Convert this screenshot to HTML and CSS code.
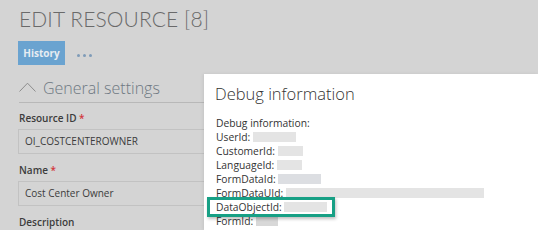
FILE: index.html
```html
<!DOCTYPE html>
<html>
<head>
<meta charset="utf-8">
<link rel="stylesheet" href="styles.css">
</head>
<body>
<div class="page">
  <h1 class="title">EDIT RESOURCE [8]</h1>
  <div class="toolbar">
    <button class="btn-history">History</button>
    <span class="dots"><i></i><i></i><i></i></span>
  </div>
  <div class="section-head">
    <svg class="chev" width="17" height="10" viewBox="0 0 17 10"><path d="M0.5 9.5 L8.5 1.2 L16.5 9.5" fill="none" stroke="#8c8c8c" stroke-width="1"/></svg>
    <span class="section-title">General settings</span>
  </div>
  <div class="field">
    <div class="label">Resource ID <span class="req">*</span></div>
    <div class="input">OI_COSTCENTEROWNER</div>
  </div>
  <div class="field">
    <div class="label">Name <span class="req">*</span></div>
    <div class="input">Cost Center Owner</div>
  </div>
  <div class="field">
    <div class="label">Description</div>
  </div>
</div>

<div class="modal">
  <h2 class="modal-title">Debug information</h2>
  <div class="debug">
    <div class="row">Debug information:</div>
    <div class="row">UserId: <span class="mask" style="width:43px"></span></div>
    <div class="row">CustomerId: <span class="mask" style="width:25px"></span></div>
    <div class="row">LanguageId: <span class="mask" style="width:25px"></span></div>
    <div class="row">FormDataId: <span class="mask mask-blue" style="width:43px"></span></div>
    <div class="row">FormDataUId: <span class="mask" style="width:198px"></span></div>
    <div class="row hl">DataObjectId: <span class="mask" style="width:43px"></span></div>
    <div class="row">FormId: <span class="mask mask-dark" style="width:22px"></span></div>
  </div>
</div>
</body>
</html>
```
FILE: styles.css
```css
html, body {
  margin: 0;
  padding: 0;
  background: #d4d4d4;
  overflow: hidden;
}
body {
  width: 538px;
  height: 230px;
  position: relative;
  font-family: "Open Sans", "Liberation Sans", sans-serif;
}
.page {
  padding: 6px 0 0 19px;
  width: 520px;
}
.title {
  margin: 0;
  font-family: "Lato", sans-serif;
  font-weight: 300;
  font-size: 21px;
  line-height: 26px;
  color: #6a6a6a;
  letter-spacing: 0.1px;
}
.toolbar {
  display: flex;
  align-items: center;
  margin-top: 9px;
  height: 24px;
  margin-left: -1px;
}
.btn-history {
  height: 24px;
  width: 47px;
  border: 0;
  padding: 0;
  background: #6aa3d0;
  color: #e6ecf2;
  font-family: "Open Sans", sans-serif;
  font-weight: 700;
  font-size: 10px;
}
.dots {
  display: flex;
  gap: 3px;
  margin-left: 12px;
  margin-top: 5px;
}
.dots i {
  width: 3px;
  height: 3px;
  border-radius: 50%;
  background: #7f9bb8;
}
.section-head {
  display: flex;
  align-items: center;
  gap: 7px;
  margin-top: 13px;
  padding-bottom: 4px;
  border-bottom: 1px solid #b8b8b8;
}
.chev { display: block; margin-top: -3px; }
.section-title {
  font-family: "Open Sans", sans-serif;
  font-weight: 300;
  font-size: 16px;
  line-height: 20px;
  color: #6e7882;
}
.field { margin-top: 8px; }
.field + .field { margin-top: 9px; }
.label {
  font-size: 10px;
  font-weight: 600;
  color: #3c3c3c;
  line-height: 14px;
}
.req { color: #d2363b; }
.input {
  margin-top: 4px;
  margin-left: -1px;
  height: 23px;
  border: 1px solid #c2c2c2;
  padding-left: 6px;
  font-size: 10px;
  line-height: 23px;
  color: #3c3c3c;
}
.modal {
  position: absolute;
  left: 204px;
  top: 74px;
  right: 0;
  bottom: 0;
  background: #ffffff;
  padding: 8px 0 0 11px;
  box-shadow: -1px 0 3px rgba(0,0,0,0.08);
}
.modal-title {
  margin: 0;
  font-family: "Open Sans", sans-serif;
  font-weight: 300;
  font-size: 16.5px;
  line-height: 24px;
  color: #333;
}
.debug {
  margin-top: 10px;
  padding-left: 1px;
  font-size: 10.3px;
  line-height: 14px;
  color: #333;
}
.row {
  display: flex;
  align-items: center;
  white-space: pre;
  width: max-content;
}
.mask {
  display: inline-block;
  height: 10px;
  background: #e4e4e4;
}
.mask-blue { background: #dcdee2; }
.mask-dark { background: #d8d8d8; }
.hl {
  position: relative;
}
.hl::before {
  content: "";
  position: absolute;
  left: -9px;
  right: -8px;
  top: -3px;
  bottom: -3px;
  border: 3px solid #17a085;
  box-shadow: 1px 2px 3px rgba(0,0,0,0.25);
}
```
